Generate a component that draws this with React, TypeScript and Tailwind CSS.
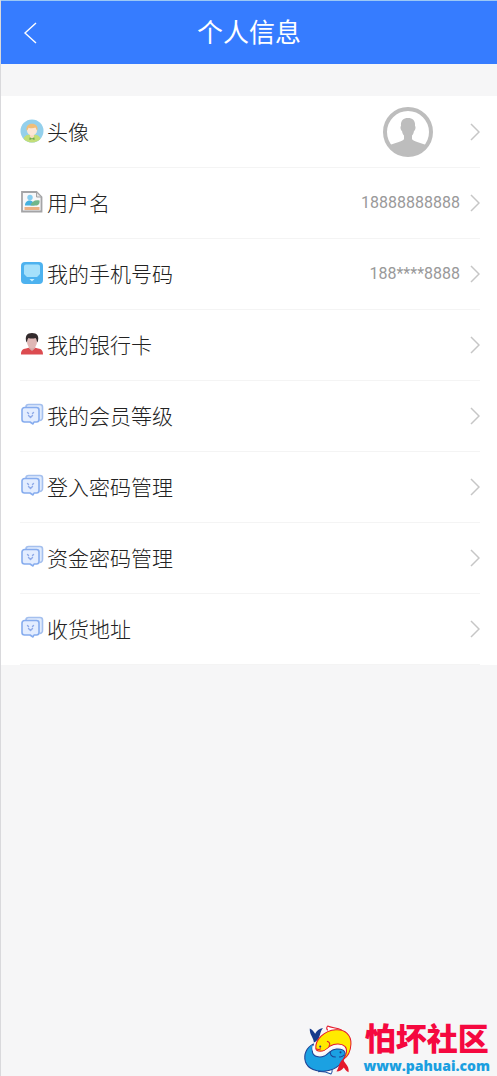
import type { ReactNode } from 'react';

interface ProfileRow {
  label: string;
  icon: ReactNode;
  value?: ReactNode;
}

function BoyIcon() {
  return (
    <svg viewBox="0 0 24 24" className="size-6">
      <circle cx="12" cy="12" r="11.5" fill="#94d0ec" />
      <path d="M3.500 19.800c1-3.400 4-4.300 8.500-4.300s7.500.9 8.500 4.300A11.500 11.500 0 0 1 3.500 19.800z" fill="#c3de78" />
      <path d="M10 14h4v3.500l-2 2-2-2z" fill="#f7d9c0" />
      <circle cx="12" cy="11.500" r="5" fill="#fce6d6" />
      <path d="M6.500 11.500c-.6-4.500 2-6.700 5.500-6.700s6.200 2.200 5.500 6.700c-1-.4-1.500-2.200-2-3-2 1-5 1-7 .2-.4 1.200-1 2.600-2 2.800z" fill="#f0be78" />
      <path d="M9.500 18.500l2.500 1 2.500-1v2.400l-2.500-.8-2.500.8z" fill="#6fa552" />
    </svg>
  );
}

function PictureIcon() {
  return (
    <svg viewBox="0 0 24 24" className="size-6">
      <path d="M2 2h14.500l5 5v14.500H2z" fill="#f7f7f8" stroke="#a4a4a6" strokeWidth="1.800" />
      <path d="M16.500 2v5h5z" fill="#e4e4e5" stroke="#a4a4a6" strokeWidth="1" />
      <circle cx="10" cy="7.500" r="2.700" fill="#85cdf0" />
      <path d="M5 15.500c0-4 3-5.500 5.500-5 2 .4 2.500 2 4 2.500v2.500H5z" fill="#45b1df" />
      <path d="M10.500 15.500c1-4 4.500-6 9-5 .5 3-1 5-4 5z" fill="#70b68a" />
      <path d="M4.500 18.500h15" stroke="#eab184" strokeWidth="3" />
    </svg>
  );
}

function PhoneIcon() {
  return (
    <svg viewBox="0 0 24 24" className="size-6">
      <rect x="1" y="1" width="22" height="22" rx="4" fill="#4db2ef" />
      <path d="M6 3.500h12a2 2 0 0 1 2 2V13l-3 3H7l-3-3V5.500a2 2 0 0 1 2-2z" fill="#a5e0fb" />
      <path d="M9.500 18h5L12 20.500z" fill="#c9f0ff" />
    </svg>
  );
}

function PersonIcon() {
  return (
    <svg viewBox="0 0 24 24" className="size-6">
      <path d="M1 22.500c0-4 1.500-5.500 5-6l3.500-1h5l3.500 1c3.500.5 5 2 5 6z" fill="#dc4b50" />
      <path d="M9 13.500h6v3L12 19l-3-2.500z" fill="#d7a8a7" />
      <ellipse cx="12" cy="10" rx="5" ry="6.500" fill="#dfb7b5" />
      <path d="M6.500 10.500C4.500 4 7 1 12 1s7.800 3 5.500 9.500C16.500 9.500 17 7.500 15.500 6 13 7 10 6.500 8.500 6 7 7.500 7.500 9.500 6.500 10.500z" fill="#332b2d" />
    </svg>
  );
}

function ChatCardIcon() {
  return (
    <svg viewBox="0 0 24 24" className="size-6" fill="none" strokeLinejoin="round">
      <path d="M6 4.500V4a2.500 2.500 0 0 1 2.500-2.500H20A2.500 2.500 0 0 1 22.500 4v10a3 3 0 0 1-3 3.500" fill="#e0ebfd" stroke="#a5c0ee" strokeWidth="1.600" />
      <path d="M4.500 4.500h12A2.500 2.500 0 0 1 19 7v9.500a2.500 2.500 0 0 1-2.500 2.500H14l-1 2-3-2H4.500A2.500 2.500 0 0 1 2 16.500V7a2.500 2.500 0 0 1 2.500-2.500z" fill="#e3edff" stroke="#86acee" strokeWidth="1.600" />
      <path d="M7.500 9.500l1 1M13.500 9.500l-1 1M8.500 12.500l2 2 2-2" stroke="#8faae8" strokeWidth="1.400" strokeLinecap="round" />
    </svg>
  );
}

function Avatar() {
  return (
    <svg viewBox="0 0 50 50" className="mr-[17px] size-[50px]" role="img" aria-label="头像">
      <circle cx="25" cy="25" r="23" fill="#fff" stroke="#bdbdbd" strokeWidth="4" />
      <path d="M25 11c5 0 7.500 3 7 8 1 .5.500 4-1 5-.4 2-1 3.500-2 4.500v3.500c1 3 10 3.500 14.500 6.500A23 23 0 0 1 6.500 38.500C11 35.500 20 35 21 32v-3.500c-1-1-1.600-2.500-2-4.500-1.500-1-2-4.500-1-5-.5-5 2-8 7-8z" fill="#bdbdbd" />
    </svg>
  );
}

function ChevronRight() {
  return (
    <svg viewBox="0 0 10 18" className="h-[18px] w-[10px] shrink-0" fill="none" stroke="#c6c6c6" strokeWidth="1.500">
      <path d="M1 1l8 8-8 8" />
    </svg>
  );
}

function FishLogo() {
  return (
    <svg viewBox="18 22 152 148" className="h-[50px] w-[52px]" strokeWidth="3" strokeLinejoin="round">
      {/* fins */}
      <path d="M90 38c-4-5-4-9 0-13 12 6 28 4 42 12" fill="#fff" stroke="#e5192b" />
      <path d="M62 160c14-1 26 2 38 7 4-4 4-8 3-14" fill="#fff" stroke="#1d4da1" />
      {/* blue fish */}
      <path d="M48 78C28 88 18 108 24 130c7 22 33 32 61 28 30-4 54-24 57-50 0-12-12-16-26-15-18 1-22 14-36 21-14 6-32 2-35-12-2-9-1-16 3-24z" fill="#1ba1e2" stroke="#1d3f92" />
      <path d="M49 74C50 60 36 52 37 32c8 3 12 9 16 16 4-9 12-15 23-17-8 9-7 20-13 32-4 6-9 9-14 11z" fill="#173a8c" />
      {/* yellow fish */}
      <path d="M55 92C52 66 80 38 114 36c28-2 46 16 45 42-1 22-10 38-23 46 10-12 14-30 5-39-9-8-30-9-43-1-9 7-13 14-24 15-9 1-18-1-19-7z" fill="#ffea00" stroke="#e5192b" />
      <path d="M137 122c-2 12 18 18 15 40-8-4-11-9-14-14-6 8-12 12-22 12 8-11 6-28 21-38z" fill="#e5192b" />
      {/* light gap between the two bodies */}
      <path d="M47 84c-3 18 8 26 20 23 16-3 22-15 36-20 12-4 28-3 36 4" fill="none" stroke="#fff" strokeWidth="4" />
      {/* faces */}
      <path d="M88 70c9 3 11 10 5 15M56 92c5 3 10 3 14 0" fill="none" stroke="#e5192b" />
      <path d="M98 99c-3 10 4 18 16 18M124 116c6 2 11-1 15-6" fill="none" stroke="#1d3f92" />
      <circle cx="68" cy="86" r="3" fill="#173a8c" />
      <circle cx="128" cy="103" r="3" fill="#173a8c" />
    </svg>
  );
}

const rows: ProfileRow[] = [
  { label: '头像', icon: <BoyIcon />, value: <Avatar /> },
  { label: '用户名', icon: <PictureIcon />, value: '18888888888' },
  { label: '我的手机号码', icon: <PhoneIcon />, value: '188****8888' },
  { label: '我的银行卡', icon: <PersonIcon /> },
  { label: '我的会员等级', icon: <ChatCardIcon /> },
  { label: '登入密码管理', icon: <ChatCardIcon /> },
  { label: '资金密码管理', icon: <ChatCardIcon /> },
  { label: '收货地址', icon: <ChatCardIcon /> },
];

export default function App() {
  return (
    <div className="flex min-h-screen flex-col border-l border-[#d9d9dc] bg-[#f6f6f7] font-['Roboto','Noto_Sans_CJK_SC',sans-serif]">
      {/* Header */}
      <header className="grid h-16 grid-cols-[64px_1fr_64px] items-center border-t border-[#9cc8f5] bg-[#367cff] text-white">
        <button type="button" aria-label="返回" className="flex h-full items-center pl-[22px]">
          <svg viewBox="0 0 14 22" className="h-[22px] w-[14px]" fill="none" stroke="currentColor" strokeWidth="1.400">
            <path d="M13 1L2 11l11 10" />
          </svg>
        </button>
        <h1 className="text-center text-[26px] leading-8">个人信息</h1>
      </header>

      {/* Settings list */}
      <nav className="mt-8 bg-white pt-px pr-[17px] pl-[19px]">
        {rows.map((row) => (
          <a key={row.label} href="#" className="flex h-[71px] items-center border-b border-[#f4f4f4]">
            <span className="shrink-0 pb-0.5">{row.icon}</span>
            <span className="ml-[3px] pt-0.5 text-[21px] leading-8 font-light text-[#222]">{row.label}</span>
            <span className={`ml-auto text-base text-[#999] ${typeof row.value === 'string' ? 'mr-[10px]' : 'mr-5'}`}>
              {row.value}
            </span>
            <ChevronRight />
          </a>
        ))}
      </nav>

      {/* Site mark */}
      <footer className="mt-auto flex items-center justify-end gap-2 pr-[7px]">
        <FishLogo />
        <div className="flex flex-col items-center">
          <span className="text-[31px] leading-8 font-black text-[#f5083f]">怕坏社区</span>
          <a href="#" className="font-['Open_Sans',sans-serif] text-sm leading-5 font-extrabold text-[#1b9fe0]">www.pahuai.com</a>
        </div>
      </footer>
    </div>
  );
}
